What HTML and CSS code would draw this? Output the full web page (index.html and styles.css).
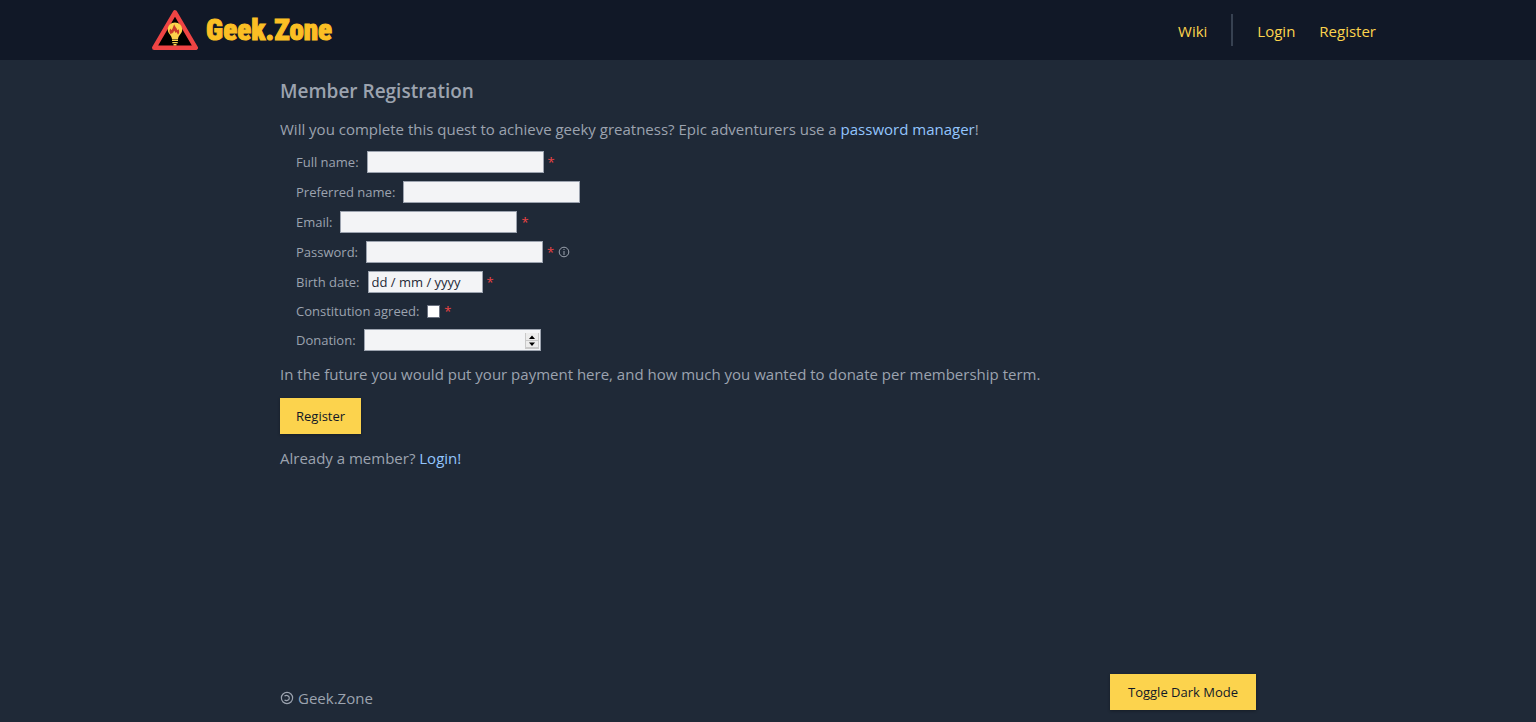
FILE: index.html
```html
<!DOCTYPE html>
<html lang="en">
<head>
<meta charset="utf-8">
<meta name="viewport" content="width=device-width, initial-scale=1">
<title>Member Registration - Geek.Zone</title>
<link rel="stylesheet" href="styles.css">
</head>
<body>
<header class="site-header">
  <div class="header-inner">
    <a class="brand" href="#">
      <svg class="brand-mark" viewBox="0 0 46 40" aria-hidden="true">
        <path d="M23 2.400 43.800 37.800H2.200Z" fill="#000" stroke="#ef4444" stroke-width="4.400" stroke-linejoin="round"/>
        <path d="M23 12.400c-4.200 0-7.200 3.100-7.200 7 0 4.300 3.600 5.200 4.200 9.600h6c.6-4.400 4.200-5.300 4.200-9.600 0-3.900-3-7-7.200-7Z" fill="#fcd34d"/>
        <path d="M20 30.200h6M20.300 32.600h5.400M21.500 34.700h3" stroke="#fcd34d" stroke-width="1.400"/>
        <path d="M19 24.600c-2-2-2-4.400-.4-6l.8 1.700c1.500-1.600 1.600-3.600 2.800-6 .6 2.800 3 3.800 3.100 6l1.300-1.100c1 2 .8 4-.6 5.600l-1.400-2.800-1 1-1.400-2.600-1.400 3-.7-1Z" fill="#c93a2b"/>
      </svg>
      <span class="brand-name">Geek.Zone</span>
    </a>
    <nav class="nav">
      <a href="#">Wiki</a>
      <span class="nav-divider"></span>
      <a href="#">Login</a>
      <a href="#">Register</a>
    </nav>
  </div>
</header>
<main class="content">
  <h1 class="title">Member Registration</h1>
  <p class="text">Will you complete this quest to achieve geeky greatness? Epic adventurers use a <a class="link" href="#">password manager</a>!</p>
  <form class="form">
    <div class="fields">
      <div class="field"><label for="name">Full name:</label><input class="box" id="name" type="text"><span class="required">*</span></div>
      <div class="field"><label for="preferred">Preferred name:</label><input class="box" id="preferred" type="text"></div>
      <div class="field"><label for="email">Email:</label><input class="box" id="email" type="email"><span class="required">*</span></div>
      <div class="field"><label for="password">Password:</label><input class="box" id="password" type="password"><span class="required">*</span>
        <svg class="info" viewBox="0 0 12 12" role="img" aria-label="Password help"><circle cx="6" cy="6" r="4.800"/><path d="M6 5v4M6 3v1"/></svg>
      </div>
      <div class="field"><label for="birth">Birth date:</label><input class="box box-date" id="birth" type="text" placeholder="dd / mm / yyyy"><span class="required">*</span></div>
      <div class="field field-check"><label for="agreed">Constitution agreed:</label><input class="check" id="agreed" type="checkbox"><span class="required">*</span></div>
      <div class="field"><label for="donation">Donation:</label>
        <span class="number"><input class="box" id="donation" type="number">
          <svg class="spinner" viewBox="0 0 14 16" aria-hidden="true"><path d="M0 0h14v16H0z" fill="#c9c9c9"/><path d="M1 0h12v7H1zM1 8h12v6H1z" fill="#ececec"/><path d="M4 6 7 2.500 10 6ZM4 9.500h6L7 13Z" fill="#000"/></svg>
        </span>
      </div>
    </div>
    <p class="text">In the future you would put your payment here, and how much you wanted to donate per membership term.</p>
    <button class="button" type="submit">Register</button>
  </form>
  <p class="text">Already a member? <a class="link" href="#">Login!</a></p>
</main>
<footer class="footer">
  <p class="text copyleft"><svg class="copyleft-mark" viewBox="0 0 14 14" role="img" aria-label="Copyleft"><circle cx="7" cy="7" r="5.600"/><path d="M4.500 5C6 4 9.300 4.200 9.300 7S6 10 4.500 9"/></svg>Geek.Zone</p>
  <button class="button" type="button">Toggle Dark Mode</button>
</footer>
</body>
</html>
```
FILE: styles.css
```css
* { box-sizing: border-box; }

body {
  display: flex;
  flex-direction: column;
  min-height: 100vh;
  margin: 0;
  background: #1f2937;
  color: #9ca3af;
  font: 15px/24px "Segoe UI", "Open Sans", sans-serif;
}

a { color: inherit; text-decoration: none; }

.site-header { background: #111827; }

.header-inner {
  display: flex;
  align-items: center;
  justify-content: space-between;
  max-width: 1280px;
  height: 60px;
  margin: 0 auto;
  padding: 0 32px 0 24px;
}

.brand { display: flex; align-items: center; gap: 8px; color: #fbbf24; }
.brand-mark { width: 46px; height: 40px; }
.brand-name {
  font: 900 29px/40px Impact, "Roboto Condensed", "Open Sans Condensed", "Noto Sans ExtraCondensed", Roboto, sans-serif;
  -webkit-text-stroke: 1px #fbbf24;
}

.nav { display: flex; align-items: center; gap: 24px; color: #fcd34d; }
.nav a { padding-top: 2px; }
.nav-divider { width: 2px; height: 32px; background: #374151; }

.content, .footer {
  width: 100%;
  max-width: 1024px;
  margin: 0 auto;
  padding: 0 24px;
}

.content { flex: 1; padding-top: 17px; }
.title { margin: 0 0 12px; font-size: 19px; line-height: 28px; font-weight: 600; }
.text { margin: 0; }
.link { color: #93c5fd; }

.form { margin-bottom: 12px; }
.fields {
  display: flex;
  flex-direction: column;
  gap: 8px;
  padding: 10px 16px 11px;
  font-size: 13px;
  line-height: 20px;
}
.field { display: flex; align-items: center; gap: 4px; height: 22px; }
.field label { margin-right: 4px; }
.field-check { height: 20px; }

.box {
  width: 177px;
  height: 22px;
  padding: 0 3px;
  border: 1px solid #9ca3af;
  border-radius: 0;
  background: #f3f4f6;
  color: #1f2937;
  font: inherit;
}
.box::placeholder { color: #1f2937; }
.box-date { width: 115px; }
.check {
  appearance: none;
  width: 13px;
  height: 13px;
  margin: 0;
  border: 1px solid #6b7280;
  background: #fff;
}
.check:checked { background: #fcd34d; }
.required { color: #ef4444; }
.info { width: 12px; height: 12px; fill: none; stroke: #9ca3af; }

.number { position: relative; display: flex; }
.number .box { appearance: textfield; }
.spinner { position: absolute; top: 4px; right: 2px; width: 14px; height: 16px; }

.button {
  height: 36px;
  padding: 0 16px;
  border: 0;
  background: #fcd34d;
  color: #111827;
  font: 13px/20px "Segoe UI", "Open Sans", sans-serif;
  box-shadow: 0 1px 3px rgba(0, 0, 0, 0.3);
}
.form .button { display: block; margin-top: 12px; }

.footer { display: flex; align-items: flex-end; justify-content: space-between; padding-bottom: 12px; }
.footer .button { padding: 0 18px; }
.copyleft { display: flex; align-items: center; gap: 4px; }
.copyleft-mark { width: 14px; height: 14px; fill: none; stroke: #9ca3af; stroke-width: 1.2; }
```
